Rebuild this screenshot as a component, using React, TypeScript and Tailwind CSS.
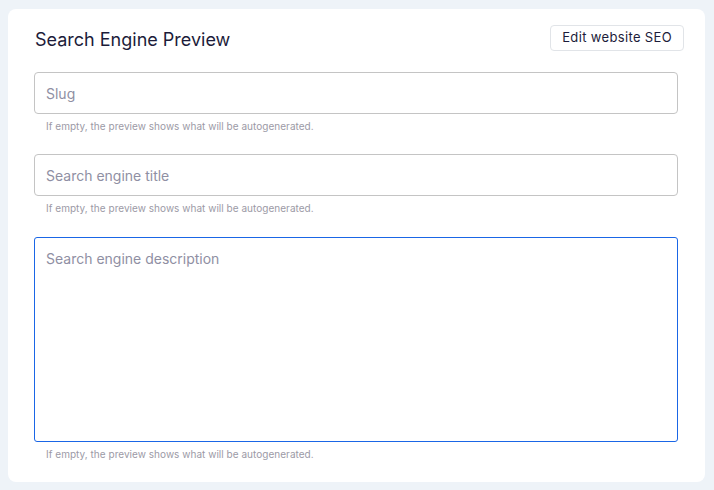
import React from "react";

export default function App() {
  const helper = "If empty, the preview shows what will be autogenerated.";
  return (
    <div
      className="w-[714px] h-[490px] bg-[#eef3f8] pt-[9px] pl-[8px] pr-[9px]"
      style={{ fontFamily: "Inter, 'Noto Sans', sans-serif" }}
    >
      <div className="bg-white rounded-[8px] h-[473px] pl-[26px] pr-[21px] pt-[16px]">
        <div className="flex items-center justify-between h-[26px]">
          <h2 className="text-[18px] leading-[26px] text-[#1c1c3a] pl-[1px] mt-[4px]">
            Search Engine Preview
          </h2>
          <button className="h-[26px] px-[11px] border border-[#e1e4e8] rounded-[4px] text-[13px] tracking-[0.35px] text-[#1c1c3a] bg-white">
            Edit website SEO
          </button>
        </div>
        <div className="mr-[6px] mt-[21px]">
          <div className="h-[42px] border border-[#c4c4c4] rounded-[4px] flex items-center px-[11px] text-[14px] text-[#8f8fa3]">
            Slug
          </div>
          <p className="mt-[5px] pl-[12px] text-[10px] leading-[14px] tracking-[0.03px] text-[#9c9aa6]">{helper}</p>
          <div className="mt-[21px] h-[42px] border border-[#c4c4c4] rounded-[4px] flex items-center px-[11px] text-[14px] text-[#8f8fa3]">
            Search engine title
          </div>
          <p className="mt-[5px] pl-[12px] text-[10px] leading-[14px] tracking-[0.03px] text-[#9c9aa6]">{helper}</p>
          <div className="mt-[22px] h-[205px] border border-[#1a66e6] rounded-[3px] px-[11px] pt-[12px] text-[14px] leading-[18px] text-[#8f8fa3]">
            Search engine description
          </div>
          <p className="mt-[5px] pl-[12px] text-[10px] leading-[14px] tracking-[0.03px] text-[#9c9aa6]">{helper}</p>
        </div>
      </div>
    </div>
  );
}
